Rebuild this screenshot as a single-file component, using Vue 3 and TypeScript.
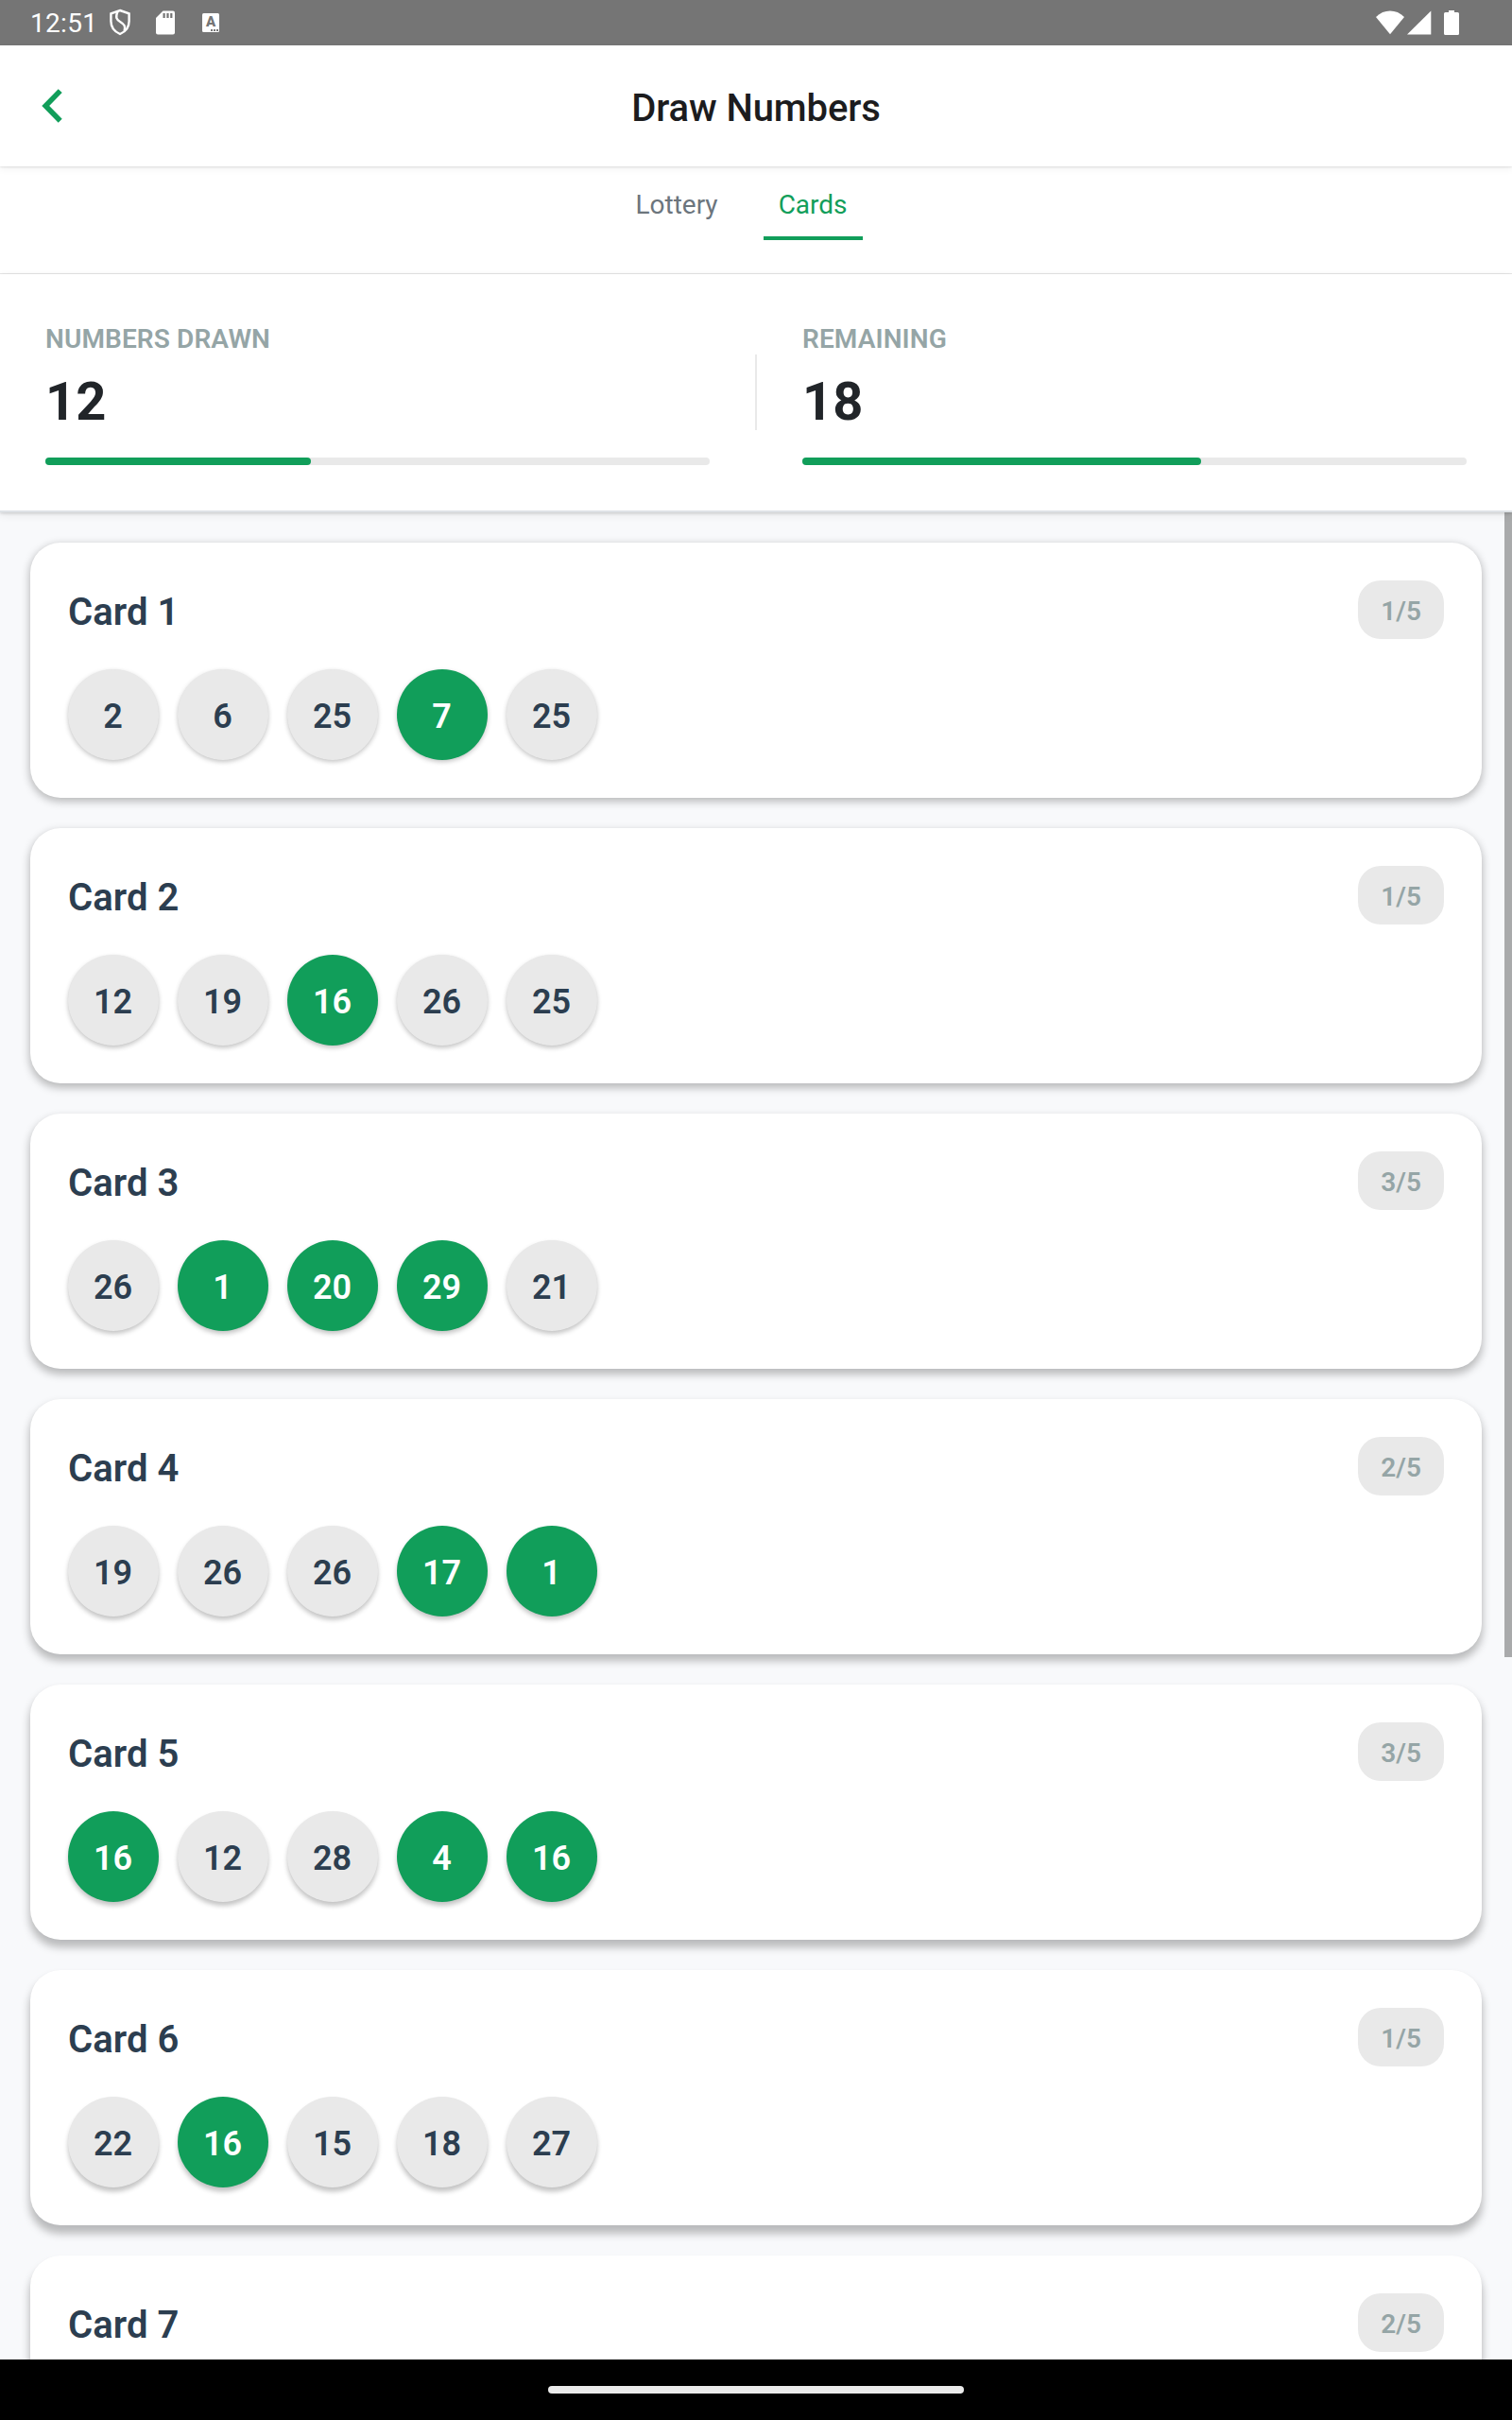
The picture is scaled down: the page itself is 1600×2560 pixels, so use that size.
<script setup lang="ts">
interface LotteryCard {
  id: number
  numbers: number[]
  hits: number[]
  matched: number
}

interface Stat {
  label: string
  value: number
  percent: number
}

const stats: Stat[] = [
  { label: 'NUMBERS DRAWN', value: 12, percent: 40 },
  { label: 'REMAINING', value: 18, percent: 60 },
]

// hits holds the positions of the drawn numbers
const cards: LotteryCard[] = [
  { id: 1, numbers: [2, 6, 25, 7, 25], hits: [3], matched: 1 },
  { id: 2, numbers: [12, 19, 16, 26, 25], hits: [2], matched: 1 },
  { id: 3, numbers: [26, 1, 20, 29, 21], hits: [1, 2, 3], matched: 3 },
  { id: 4, numbers: [19, 26, 26, 17, 1], hits: [3, 4], matched: 2 },
  { id: 5, numbers: [16, 12, 28, 4, 16], hits: [0, 3, 4], matched: 3 },
  { id: 6, numbers: [22, 16, 15, 18, 27], hits: [1], matched: 1 },
  { id: 7, numbers: [], hits: [], matched: 2 },
]

// Elevation shadows fall further the lower the card sits on screen
function elevation(index: number) {
  return {
    '--drop': `${(2.8 + index * 1.1).toFixed(2)}px`,
    '--ball-drop': `${(1.9 + index * 0.5).toFixed(2)}px`,
  }
}
</script>

<template>
  <div class="screen">
    <div class="status">
      <span class="clock">12:51</span>
      <svg class="shield" width="24" height="30" viewBox="0 0 24 30" fill="none" stroke="#fff" stroke-width="2.4">
        <path d="M12 2 L21.6 5.4 V13.5 C21.6 20 17.5 24.6 12 27 C6.500 24.600 2.400 20 2.400 13.500 V5.400 Z" />
        <path d="M9.500 3.200 C6.800 9.500 8.300 12 12.400 14.200 C16.600 16.800 18 18.500 16.600 23.600" />
      </svg>
      <svg class="sd" width="20" height="26" viewBox="0 0 20 26">
        <path d="M7.500 0.500 H18 A2 2 0 0 1 20 2.500 V23.500 A2 2 0 0 1 18 25.500 H2 A2 2 0 0 1 0 23.500 V8 Z" fill="#fff" />
        <path d="M7.500 3 h2.200 v5 h-2.200z M11.400 3 h2.200 v5 h-2.200z M15.200 3 h2.200 v5 h-2.200z" fill="#757575" />
      </svg>
      <div class="kbd">
        <span>A</span>
        <i></i>
      </div>
      <div class="system">
        <svg width="30" height="26" viewBox="0 0 30 26" fill="#fff"><path d="M0 7 C8.500 -1.600 21.500 -1.600 30 7 L15 25.300 Z" /></svg>
        <svg class="signal" width="26" height="26" viewBox="0 0 26 26" fill="#fff"><path d="M0 25.500 L25.300 0.400 V25.500 Z" /></svg>
        <svg class="battery" width="16" height="26" viewBox="0 0 16 26" fill="#fff"><path d="M5 0 H11 V2 H14.500 A1.500 1.500 0 0 1 16 3.500 V24.500 A1.500 1.500 0 0 1 14.500 26 H1.500 A1.500 1.500 0 0 1 0 24.500 V3.500 A1.500 1.500 0 0 1 1.500 2 H5 Z" /></svg>
      </div>
    </div>

    <header class="header">
      <svg class="back" width="22" height="36" viewBox="0 0 22 36" fill="none" stroke="#119e5a" stroke-width="5.600">
        <path d="M19.700 2.100 L4.200 18 L19.700 33.700" />
      </svg>
      <h1>Draw Numbers</h1>
    </header>

    <nav class="tabs">
      <div class="tab">Lottery</div>
      <div class="tab active">Cards</div>
    </nav>

    <section class="stats">
      <template v-for="(stat, i) in stats" :key="stat.label">
        <div v-if="i > 0" class="divider"></div>
        <div class="stat">
          <div class="label">{{ stat.label }}</div>
          <div class="value">{{ stat.value }}</div>
          <div class="track"><div class="fill" :style="{ width: stat.percent + '%' }"></div></div>
        </div>
      </template>
    </section>

    <main class="list">
      <article v-for="(card, i) in cards" :key="card.id" class="card" :style="elevation(i)">
        <div class="card-head">
          <h2>Card {{ card.id }}</h2>
          <span class="chip">{{ card.matched }}/5</span>
        </div>
        <div class="balls">
          <div v-for="(n, j) in card.numbers" :key="j" class="ball" :class="{ hit: card.hits.includes(j) }">{{ n }}</div>
        </div>
      </article>
      <div class="scrollbar"></div>
    </main>

    <footer class="navbar"><div class="pill"></div></footer>
  </div>
</template>

<style>
body {
  margin: 0;
}
</style>

<style scoped>
.screen {
  width: 1600px;
  height: 2560px;
  display: flex;
  flex-direction: column;
  overflow: hidden;
  background: #f8f9fb;
  font-family: Roboto, sans-serif;
}
.status {
  flex: none;
  height: 48px;
  box-sizing: border-box;
  padding: 0 56px 0 32px;
  display: flex;
  align-items: center;
  background: #757575;
}
.clock {
  width: 84px;
  color: #fff;
  font-size: 28px;
  line-height: 47px;
  letter-spacing: 0.3px;
  white-space: nowrap;
}
.shield {
  margin-left: -1px;
}
.sd {
  margin-left: 26px;
}
.kbd {
  width: 18px;
  height: 20px;
  margin-left: 29px;
  position: relative;
  border-radius: 1.5px;
  background: #fff;
  color: #757575;
  font-size: 15px;
  font-weight: 900;
  line-height: 19px;
  text-align: center;
}
.kbd i {
  position: absolute;
  right: 1px;
  bottom: 1px;
  width: 8px;
  height: 2px;
  background: repeating-linear-gradient(90deg, #757575 0 2px, #fff 2px 3px);
}
.system {
  margin-left: auto;
  display: flex;
}
.signal {
  margin-left: 3px;
}
.battery {
  margin-left: 13px;
}
.header {
  flex: none;
  height: 128px;
  display: flex;
  align-items: center;
  justify-content: center;
  position: relative;
  z-index: 2;
  background: #fff;
  box-shadow: 0 1px 2px rgba(0, 0, 0, 0.1), 0 3px 8px rgba(0, 0, 0, 0.05);
}
.back {
  position: absolute;
  left: 44px;
  top: 46px;
}
h1 {
  margin: 5px 0 0;
  font-size: 40px;
  font-weight: 500;
  line-height: 47px;
  letter-spacing: -0.1px;
  color: #1c1c1e;
}
.tabs {
  flex: none;
  height: 114px;
  box-sizing: border-box;
  padding-left: 1px;
  border-bottom: 1px solid #e9e9e9;
  background: #fff;
  display: flex;
  justify-content: center;
  align-items: flex-start;
}
.tab {
  height: 78px;
  box-sizing: border-box;
  margin-right: 32px;
  padding: 24px 16px 0;
  border-bottom: 4px solid transparent;
  font-size: 28px;
  line-height: 33px;
  color: #6c757d;
}
.tab.active {
  color: #119e5a;
  border-bottom-color: #119e5a;
}
.stats {
  flex: none;
  height: 252px;
  box-sizing: border-box;
  padding: 48px 48px 0;
  border-bottom: 2px solid #dee2e6;
  display: flex;
  background: #fff;
  position: relative;
  z-index: 2;
  box-shadow: 0 1px 3px rgba(0, 0, 0, 0.16), 0 3px 9px rgba(0, 0, 0, 0.07);
}
.divider {
  width: 2px;
  height: 80px;
  margin: 37px 48px 0;
  background: #e9e9e9;
}
.stat {
  flex: 1;
}
.label {
  font-size: 28px;
  font-weight: 600;
  line-height: 41px;
  letter-spacing: 0.12px;
  color: #95a5a6;
}
.value {
  margin-top: 14px;
  font-size: 56px;
  font-weight: 700;
  line-height: 64px;
  color: #212529;
}
.track {
  margin-top: 27px;
  height: 8px;
  border-radius: 4px;
  background: #e9e9e9;
}
.fill {
  height: 8px;
  border-radius: 4px;
  background: #119e5a;
}
.list {
  flex: 1;
  min-height: 0;
  padding: 32px 32px 0;
  display: flex;
  flex-direction: column;
  gap: 32px;
  position: relative;
  overflow: hidden;
}
.card {
  flex: none;
  height: 270px;
  box-sizing: border-box;
  padding: 40px;
  border-radius: 32px;
  background: #fff;
  box-shadow: 0 0 1px rgba(0, 0, 0, 0.04), 0 var(--drop) 8px 0.5px rgba(0, 0, 0, 0.25);
}
.card-head {
  height: 62px;
  display: flex;
  justify-content: space-between;
  align-items: center;
}
h2 {
  margin: 5px 0 0;
  font-size: 40px;
  font-weight: 600;
  line-height: 47px;
  letter-spacing: 0.1px;
  color: #2c3e50;
}
.chip {
  height: 62px;
  box-sizing: border-box;
  padding: 0 24px;
  border-radius: 24px;
  background: #e9e9e9;
  color: #95a5a6;
  font-size: 28px;
  font-weight: 600;
  line-height: 65px;
}
.balls {
  margin-top: 32px;
  display: flex;
  gap: 20px;
}
.ball {
  width: 96px;
  height: 96px;
  border-radius: 50%;
  background: #e9e9e9;
  color: #2c3e50;
  font-size: 36px;
  font-weight: 600;
  line-height: 100px;
  text-align: center;
  text-indent: -1px;
  box-shadow: 0 0 1px rgba(0, 0, 0, 0.05), 0 var(--ball-drop) 5px rgba(0, 0, 0, 0.23);
}
.ball.hit {
  background: #119e5a;
  color: #fff;
}
.scrollbar {
  position: absolute;
  right: 0;
  top: 0;
  width: 8px;
  height: 1211px;
  background: #a9aaab;
}
.navbar {
  flex: none;
  height: 64px;
  display: flex;
  align-items: center;
  justify-content: center;
  position: relative;
  background: #000;
}
.pill {
  width: 440px;
  height: 8px;
  border-radius: 4px;
  background: #ebebeb;
}
</style>
